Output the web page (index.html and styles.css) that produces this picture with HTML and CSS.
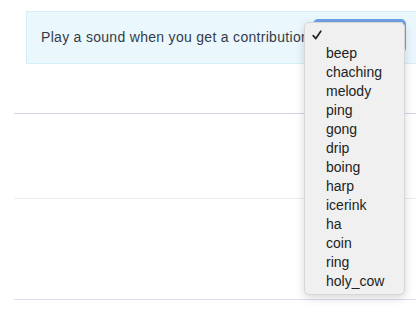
FILE: index.html
```html
<!DOCTYPE html>
<html>
<head>
<meta charset="utf-8">
<link rel="stylesheet" href="styles.css">
</head>
<body>
<div class="page">
  <div class="banner">
    <span class="label">Play a sound when you get a contribution</span>
    <div class="select"></div>
  </div>
  <div class="row row-a"></div>
  <div class="row row-b"></div>
  <div class="row row-c"></div>
</div>
<ul class="menu">
  <li class="checked"><svg class="check" width="10" height="10" viewBox="0 0 10 10"><path d="M1.2 5.6 L3.8 8.6 L8.8 1.2" fill="none" stroke="#222" stroke-width="1.7" stroke-linecap="round" stroke-linejoin="round"/></svg>&nbsp;</li>
  <li>beep</li>
  <li>chaching</li>
  <li>melody</li>
  <li>ping</li>
  <li>gong</li>
  <li>drip</li>
  <li>boing</li>
  <li>harp</li>
  <li>icerink</li>
  <li>ha</li>
  <li>coin</li>
  <li>ring</li>
  <li>holy_cow</li>
</ul>
</body>
</html>
```
FILE: styles.css
```css
html, body {
  margin: 0;
  padding: 0;
  background: #ffffff;
  overflow: hidden;
  width: 416px;
  height: 312px;
  font-family: "Liberation Sans", Arial, sans-serif;
}
.page {
  padding-top: 11px;
  margin-left: 14px;
  width: 600px;
}
.banner {
  margin-left: 12px;
  height: 51px;
  background: #eaf7fd;
  border: 1px solid #d6eef8;
  border-right: none;
  display: flex;
  align-items: center;
  padding-left: 14px;
}
.label {
  font-size: 14px;
  letter-spacing: 0.3px;
  color: #343c48;
  white-space: nowrap;
  margin-top: -1px;
  width: 272px;
  flex: none;
}
.select {
  flex: none;
  width: 87px;
  height: 28px;
  margin-top: -3px;
  border: 3px solid #6ea2e6;
  border-radius: 5px;
  background: #f4f4f4;
  box-sizing: content-box;
}
.row {
  border-bottom: 1px solid #eeeeee;
}
.row-a {
  height: 49px;
  border-bottom-color: #d3d4e4;
}
.row-b {
  height: 84px;
  border-bottom-color: #ececec;
}
.row-c {
  height: 100px;
  border-bottom-color: #dedcf0;
}
.menu {
  position: absolute;
  left: 304px;
  top: 22px;
  width: 101px;
  margin: 0;
  padding: 2px 0 5px 0;
  list-style: none;
  background: #f0f0f0;
  border: 1px solid #d6d6d6;
  border-radius: 5px;
  box-shadow: 0 3px 10px rgba(0, 0, 0, 0.16);
  box-sizing: border-box;
  height: 273px;
}
.menu li {
  position: relative;
  height: 19px;
  line-height: 19px;
  padding-left: 21px;
  font-size: 14px;
  color: #222222;
}
.check {
  position: absolute;
  left: 7px;
  top: 5px;
}
```
